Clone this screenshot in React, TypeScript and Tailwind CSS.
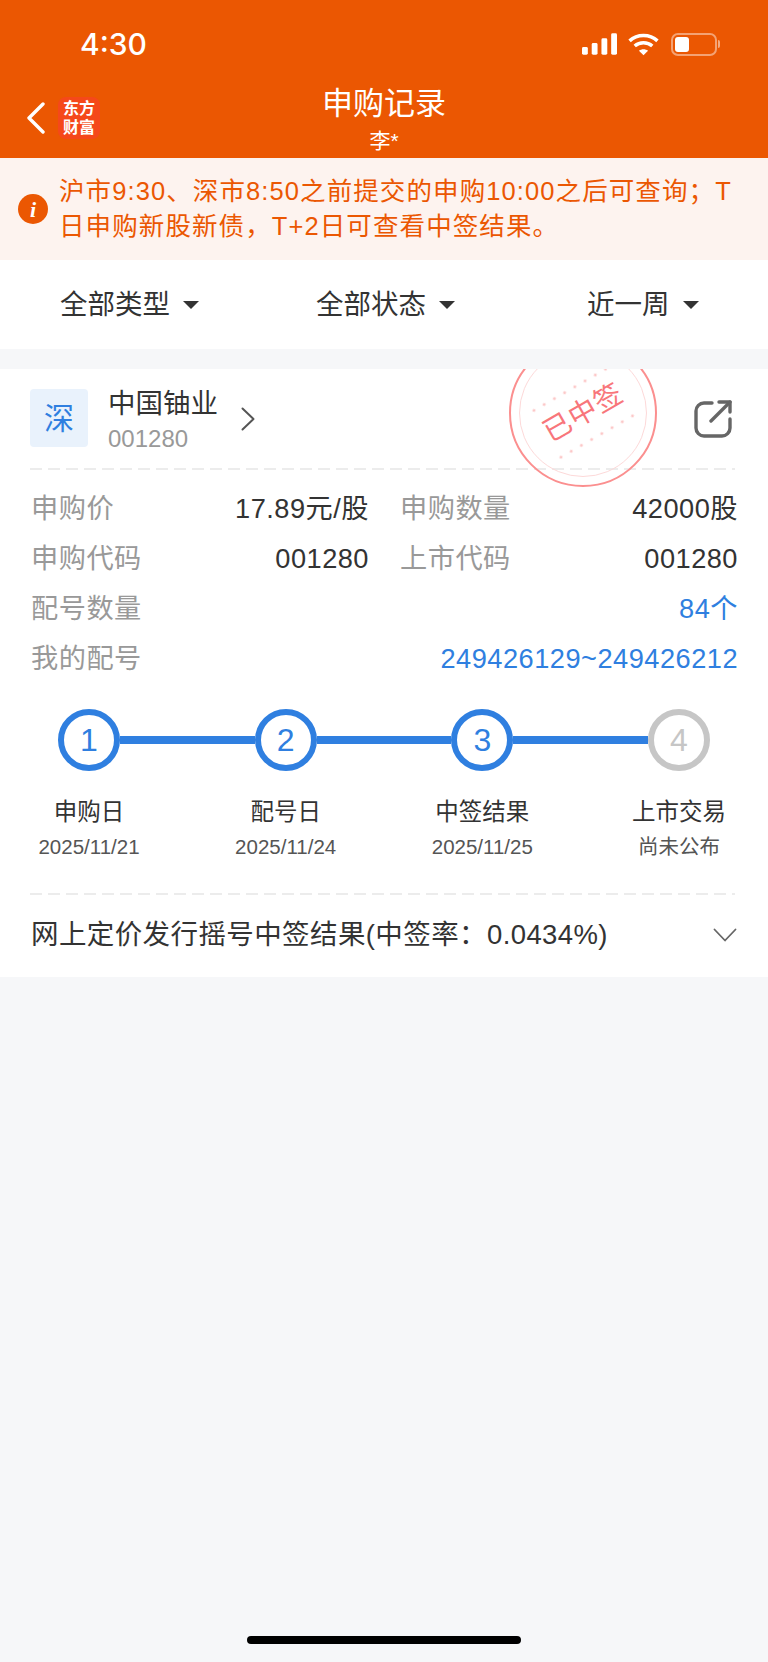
const font = { fontFamily: '"Liberation Sans", "Noto Sans CJK SC", sans-serif' };

const details = [
  { label: '配号数量', value: '84个' },
  { label: '我的配号', value: '249426129~249426212' },
];

const steps = [
  { n: 1, title: '申购日', date: '2025/11/21', done: true },
  { n: 2, title: '配号日', date: '2025/11/24', done: true },
  { n: 3, title: '中签结果', date: '2025/11/25', done: true },
  { n: 4, title: '上市交易', date: '尚未公布', done: false },
];

function Caret() {
  return <span className="ml-[13px] h-0 w-0 border-x-[8px] border-t-[8px] border-x-transparent border-t-[#333]" />;
}

function Dashed() {
  return <div className="ml-[30px] mr-[33px] h-[2px] bg-[repeating-linear-gradient(90deg,#ececec_0_12px,transparent_12px_18px)]" />;
}

function StatusIcons() {
  return (
    <div className="flex items-center">
      <svg width="35" height="22" viewBox="0 0 36 22" fill="white">
        <rect x="0" y="14" width="6" height="8" rx="1.5" />
        <rect x="10" y="10" width="6" height="12" rx="1.5" />
        <rect x="20" y="5" width="6" height="17" rx="1.5" />
        <rect x="30" y="0" width="6" height="22" rx="1.5" />
      </svg>
      <svg className="ml-[11px]" width="31" height="23" viewBox="0 0 30 22" fill="none" stroke="white" strokeWidth="3.4">
        <path d="M1.5 7.5C9 .6 21 .6 28.5 7.5" />
        <path d="M6.5 12.5c4.8-4.2 12.2-4.2 17 0" />
        <path d="M15 21.5 10.6 17c2.5-2 6.3-2 8.8 0z" fill="white" stroke="none" />
      </svg>
      <div className="ml-[12px] flex items-center">
        <div className="h-[23px] w-[46px] rounded-[7px] border-2 border-white/45 p-[2px]">
          <div className="h-full w-[14px] rounded-[3px] bg-white" />
        </div>
        <div className="ml-[1px] h-[8px] w-[2px] rounded-r-full bg-white/50" />
      </div>
    </div>
  );
}

function Stamp() {
  return (
    <div className="absolute left-[509px] top-0 h-[120px] w-[150px] overflow-hidden">
      <div className="absolute left-0 top-[-30px] flex h-[148px] w-[148px] items-center justify-center rounded-full border-2 border-[#fb8f8f]">
        <div className="flex h-[128px] w-[128px] items-center justify-center rounded-full border border-[#fdd9d9]">
          <div className="flex -rotate-[30deg] flex-col items-center">
            <div className="h-[4px] w-[95px] bg-[radial-gradient(circle,#fcc8c8_1.2px,transparent_1.8px)] bg-[length:11.800px_4px]" />
            <div className="my-[9px] text-[28px] leading-[32px] tracking-[1px] text-[#f8767b]">已中签</div>
            <div className="h-[4px] w-[95px] bg-[radial-gradient(circle,#fcc8c8_1.2px,transparent_1.8px)] bg-[length:11.800px_4px]" />
          </div>
        </div>
      </div>
    </div>
  );
}

export default function App() {
  return (
    <div className="relative flex h-[1662px] w-[768px] flex-col overflow-hidden bg-[#f6f7f9]" style={font}>
      {/* Header */}
      <header className="h-[158px] shrink-0 bg-[#eb5702] text-white">
        <div className="flex h-[86px] items-center justify-between pl-[80px] pr-[48px] pt-[2px]">
          <span className="text-[30px] font-medium leading-none" style={{ fontFamily: 'Inter, sans-serif' }}>4:30</span>
          <StatusIcons />
        </div>
        <div className="relative flex flex-col items-center">
          <div className="text-[31px] leading-[36px]">申购记录</div>
          <div className="mt-[7px] text-[21px] leading-[24px]">李*</div>
          <div className="absolute left-[26px] top-[11px] flex items-center">
            <svg width="20" height="32" viewBox="0 0 20 32" fill="none" stroke="white" strokeWidth="3.4" strokeLinecap="round" strokeLinejoin="round">
              <path d="M17 2 3 16l14 14" />
            </svg>
            <div className="ml-[12px] flex h-[42px] w-[42px] flex-col items-center justify-center rounded-[8px] bg-[#f5481a] text-[16px] font-bold leading-[19px]">
              <span>东方</span>
              <span>财富</span>
            </div>
          </div>
        </div>
      </header>

      {/* Notice */}
      <div className="flex h-[102px] shrink-0 items-center bg-[#fdf3ef] pl-[18px] pr-[30px] text-[#eb5702]">
        <div className="flex h-[30px] w-[30px] shrink-0 items-center justify-center rounded-full bg-[#eb5702] font-['Liberation_Serif'] text-[22px] font-bold italic text-white">i</div>
        <p className="ml-[11px] text-[25.500px] leading-[35px] tracking-[1.100px]">
          沪市9:30、深市8:50之前提交的申购10:00之后可查询；T日申购新股新债，T+2日可查看中签结果。
        </p>
      </div>

      {/* Filters */}
      <div className="flex h-[89px] shrink-0 items-center bg-white text-[27.500px] text-[#333]">
        <div className="ml-[60px] flex items-center">全部类型<Caret /></div>
        <div className="ml-[117px] flex items-center">全部状态<Caret /></div>
        <div className="ml-[132px] flex items-center">近一周<Caret /></div>
      </div>

      {/* Subscription card */}
      <section className="relative mt-[20px] h-[608px] shrink-0 bg-white">
        <Stamp />
        <div className="flex h-[99px] items-start pl-[30px] pr-[36px] pt-[20px]">
          <div className="flex h-[58px] w-[58px] items-center justify-center rounded-[4px] bg-[#e9f2fc] text-[30px] text-[#2f7fe0]">深</div>
          <div className="ml-[20px]">
            <div className="text-[27.500px] leading-[30px] text-[#333]">中国铀业</div>
            <div className="mt-[6px] text-[24px] leading-[28px] text-[#999]">001280</div>
          </div>
          <svg className="ml-[23px] mt-[18px]" width="14" height="24" viewBox="0 0 14 24" fill="none" stroke="#555" strokeWidth="2" strokeLinecap="round" strokeLinejoin="round">
            <path d="m1.5 1.5 11 10.500-11 10.500" />
          </svg>
          <svg className="ml-auto mt-[11px]" width="38" height="38" viewBox="0 0 38 38" fill="none" stroke="#666" strokeWidth="3.400" strokeLinecap="round" strokeLinejoin="round">
            <path d="M18 3H10a8 8 0 0 0-8 8v17a8 8 0 0 0 8 8h18a8 8 0 0 0 8-8v-9" />
            <path d="M17 21 36 2" />
            <path d="M25 2h11v10" />
          </svg>
        </div>
        <Dashed />

        <div className="pl-[31px] pr-[30px] pt-[14px] text-[27.200px] leading-[50px] tracking-[0.5px]">
          <div className="grid grid-cols-2 gap-x-[31px]">
            <div className="flex justify-between"><span className="text-[#999]">申购价</span><span className="text-[#333]">17.89元/股</span></div>
            <div className="flex justify-between"><span className="text-[#999]">申购数量</span><span className="text-[#333]">42000股</span></div>
            <div className="flex justify-between"><span className="text-[#999]">申购代码</span><span className="text-[#333]">001280</span></div>
            <div className="flex justify-between"><span className="text-[#999]">上市代码</span><span className="text-[#333]">001280</span></div>
          </div>
          {details.map((row) => (
            <div key={row.label} className="flex justify-between">
              <span className="text-[#999]">{row.label}</span>
              <span className="text-[#2f7fe0]">{row.value}</span>
            </div>
          ))}
        </div>

        {/* Progress steps */}
        <div className="mt-[25px] flex items-center px-[58px]">
          {steps.map((step, i) => (
            <div key={step.n} className={i < 3 ? 'flex flex-1 items-center' : 'flex items-center'}>
              <div className={`flex h-[62px] w-[62px] shrink-0 items-center justify-center rounded-full border-[6px] bg-white text-[32px] ${step.done ? 'border-[#2f7fe0] text-[#2f7fe0]' : 'border-[#c6c6c6] text-[#c6c6c6]'}`}>
                {step.n}
              </div>
              {i < 3 && <div className="h-[8px] flex-1 bg-[#2f7fe0]" />}
            </div>
          ))}
        </div>
        <div className="mt-[26px] flex justify-between px-[29px] text-center">
          {steps.map((step) => (
            <div key={step.n} className="w-[120px]">
              <div className="text-[23.500px] leading-[30px] text-[#333]">{step.title}</div>
              <div className="mt-[6px] text-[20.500px] leading-[28px] text-[#555]">{step.date}</div>
            </div>
          ))}
        </div>

        <div className="mt-[32px]"><Dashed /></div>
        <div className="flex h-[80px] items-center justify-between pl-[31px] pr-[31px] text-[27.500px] tracking-[0.4px] text-[#333]">
          <span>网上定价发行摇号中签结果(中签率：0.0434%)</span>
          <svg width="24" height="14" viewBox="0 0 24 14" fill="none" stroke="#666" strokeWidth="1.800" strokeLinecap="round" strokeLinejoin="round">
            <path d="m1.500 1.500 10.500 11 10.500-11" />
          </svg>
        </div>
      </section>

      {/* Home indicator */}
      <div className="mt-auto flex justify-center pb-[18px]">
        <div className="h-[8px] w-[274px] rounded-full bg-black" />
      </div>
    </div>
  );
}
